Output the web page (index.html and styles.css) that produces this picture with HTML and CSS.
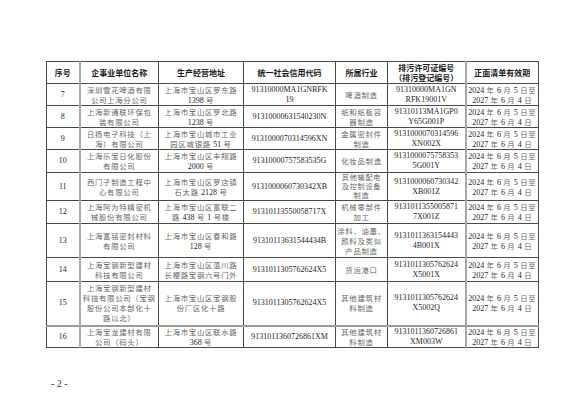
FILE: index.html
```html
<!DOCTYPE html>
<html lang="zh-CN">
<head>
<meta charset="utf-8">
<title>正面清单</title>
<link rel="stylesheet" href="styles.css">
</head>
<body>
<div class="page">
<table class="list">
<colgroup>
<col class="c1"><col class="c2"><col class="c3"><col class="c4"><col class="c5"><col class="c6"><col class="c7">
</colgroup>
<thead>
<tr class="h22">
<th>序号</th><th class="g">企事业单位名称</th><th>生产经营地址</th><th>统一社会信用代码</th><th>所属行业</th><th>排污许可证编号<br>（排污登记编号）</th><th class="g">正面清单有效期</th>
</tr>
</thead>
<tbody>
<tr class="h22">
<td class="n">7</td><td class="g">深圳雪花啤酒有限<br>公司上海分公司</td><td>上海市宝山区罗东路<br><span class="n">1398</span> 号</td><td class="n">91310000MA1GNRFK<br>19</td><td>啤酒制造</td><td class="n">91310000MA1GN<br>RFK19001V</td><td class="g"><span class="n">2024</span> 年 <span class="n">6</span> 月 <span class="n">5</span> 日至<br><span class="n">2027</span> 年 <span class="n">6</span> 月 <span class="n">4</span> 日</td>
</tr>
<tr class="h22">
<td class="n">8</td><td class="g">上海新通联环保包<br>装有限公司</td><td>上海市宝山区罗北路<br><span class="n">1238</span> 号</td><td class="n">91310000631540230N</td><td>纸和纸板容<br>器制造</td><td class="n">91310113MA1GP0<br>Y65G001P</td><td class="g"><span class="n">2024</span> 年 <span class="n">6</span> 月 <span class="n">5</span> 日至<br><span class="n">2027</span> 年 <span class="n">6</span> 月 <span class="n">4</span> 日</td>
</tr>
<tr class="h22">
<td class="n">9</td><td class="g">日扬电子科技（上<br>海）有限公司</td><td>上海市宝山城市工业<br>园区城银路 <span class="n">51</span> 号</td><td class="n">9131000070314596XN</td><td>金属密封件<br>制造</td><td class="n">9131000070314596<br>XN002X</td><td class="g"><span class="n">2024</span> 年 <span class="n">6</span> 月 <span class="n">5</span> 日至<br><span class="n">2027</span> 年 <span class="n">6</span> 月 <span class="n">4</span> 日</td>
</tr>
<tr class="h23">
<td class="n">10</td><td class="g">上海乐宝日化股份<br>有限公司</td><td>上海市宝山区丰翔路<br><span class="n">2000</span> 号</td><td class="n">91310000757583535G</td><td>化妆品制造</td><td class="n">9131000075758353<br>5G001Y</td><td class="g"><span class="n">2024</span> 年 <span class="n">6</span> 月 <span class="n">5</span> 日至<br><span class="n">2027</span> 年 <span class="n">6</span> 月 <span class="n">4</span> 日</td>
</tr>
<tr class="h28">
<td class="n">11</td><td class="g">西门子制造工程中<br>心有限公司</td><td>上海市宝山区罗店镇<br>石太路 <span class="n">2128</span> 号</td><td class="n">9131000060730342XB</td><td class="tight">其他输配电<br>及控制设备<br>制造</td><td class="n">9131000060730342<br>XB001Z</td><td class="g"><span class="n">2024</span> 年 <span class="n">6</span> 月 <span class="n">5</span> 日至<br><span class="n">2027</span> 年 <span class="n">6</span> 月 <span class="n">4</span> 日</td>
</tr>
<tr class="h23">
<td class="n">12</td><td class="g">上海阿为特精密机<br>械股份有限公司</td><td>上海市宝山区富联二<br>路 <span class="n">438</span> 号 <span class="n">1</span> 号楼</td><td class="n">91310113550058717X</td><td>机械零部件<br>加工</td><td class="n">9131011355005871<br>7X001Z</td><td class="g"><span class="n">2024</span> 年 <span class="n">6</span> 月 <span class="n">5</span> 日至<br><span class="n">2027</span> 年 <span class="n">6</span> 月 <span class="n">4</span> 日</td>
</tr>
<tr class="h34">
<td class="n">13</td><td class="g">上海富铭密封材料<br>有限公司</td><td>上海市宝山区春和路<br><span class="n">128</span> 号</td><td class="n">91310113631544434B</td><td>涂料、油墨、<br>颜料及类似<br>产品制造</td><td class="n">9131011363154443<br>4B001X</td><td class="g"><span class="n">2024</span> 年 <span class="n">6</span> 月 <span class="n">5</span> 日至<br><span class="n">2027</span> 年 <span class="n">6</span> 月 <span class="n">4</span> 日</td>
</tr>
<tr class="h24">
<td class="n">14</td><td class="g">上海宝钢新型建材<br>科技有限公司</td><td>上海市宝山区蕰川路<br>长樱路宝钢六号门外</td><td class="n">9131011305762624X5</td><td>货运港口</td><td class="n">9131011305762624<br>X5001X</td><td class="g"><span class="n">2024</span> 年 <span class="n">6</span> 月 <span class="n">5</span> 日至<br><span class="n">2027</span> 年 <span class="n">6</span> 月 <span class="n">4</span> 日</td>
</tr>
<tr class="h44">
<td class="n">15</td><td class="g">上海宝钢新型建材<br>科技有限公司（宝钢<br>股份公司本部化十<br>路以北）</td><td>上海市宝山区宝钢股<br>份厂区化十路</td><td class="n">9131011305762624X5</td><td>其他建筑材<br>料制造</td><td class="n">9131011305762624<br>X5002Q</td><td class="g"><span class="n">2024</span> 年 <span class="n">6</span> 月 <span class="n">5</span> 日至<br><span class="n">2027</span> 年 <span class="n">6</span> 月 <span class="n">4</span> 日</td>
</tr>
<tr class="h21 last">
<td class="n">16</td><td class="g">上海宝龙建材有限<br>公司（码头）</td><td>上海市宝山区联水路<br><span class="n">368</span> 号</td><td class="n">9131011360726861XM</td><td>其他建筑材<br>料制造</td><td class="n">9131011360726861<br>XM003W</td><td class="g"><span class="n">2024</span> 年 <span class="n">6</span> 月 <span class="n">5</span> 日至<br><span class="n">2027</span> 年 <span class="n">6</span> 月 <span class="n">4</span> 日</td>
</tr>
</tbody>
</table>
<div class="folio">- 2 -</div>
</div>
</body>
</html>
```
FILE: styles.css
```css
html, body {
  margin: 0;
  padding: 0;
  background: #ffffff;
}
.page {
  width: 585px;
  height: 413px;
  padding: 61px 0 0 46px;
  box-sizing: border-box;
  font-family: "Liberation Serif", "Noto Sans CJK SC", serif;
}
.list {
  border-collapse: collapse;
  table-layout: fixed;
  width: 492px;
}
.c1 { width: 33px; }
.c2 { width: 79px; }
.c3 { width: 85px; }
.c4 { width: 92px; }
.c5 { width: 52px; }
.c6 { width: 78px; }
.c7 { width: 73px; }
.list th, .list td {
  border: 1px solid #4a4a4a;
  padding: 0;
  text-align: center;
  vertical-align: middle;
  overflow: hidden;
  white-space: nowrap;
}
.list th {
  font-family: "Noto Sans CJK SC", sans-serif;
  font-weight: 700;
  font-size: 8px;
  line-height: 10px;
  color: #1a1a1a;
}
.list td {
  font-family: "Noto Sans CJK SC", "Liberation Serif", serif;
  font-size: 7.4px;
  font-weight: 400;
  line-height: 10px;
  letter-spacing: 0.7px;
  color: #666666;
}
.list td.n {
  font-family: "Liberation Serif", serif;
  font-size: 8px;
  letter-spacing: 0;
  color: #1e1e1e;
}
.list td .n {
  font-family: "Liberation Serif", serif;
  font-size: 8px;
  line-height: 0;
  letter-spacing: 0;
  color: #1e1e1e;
}
.list td.tight {
  font-size: 7.2px;
  line-height: 9px;
}
.list .g {
  border-left: 2px solid #a8a8a8;
}
.list tr.last td {
  border-top: 2px solid #9a9a9a;
}
.h21 { height: 21px; }
.h22 { height: 22px; }
.h23 { height: 23px; }
.h24 { height: 24px; }
.h28 { height: 28px; }
.h34 { height: 34px; }
.h44 { height: 44px; }
.folio {
  margin: 30px 0 0 5px;
  font-family: "Liberation Serif", serif;
  font-size: 10px;
  line-height: 12px;
  color: #333333;
}
```
